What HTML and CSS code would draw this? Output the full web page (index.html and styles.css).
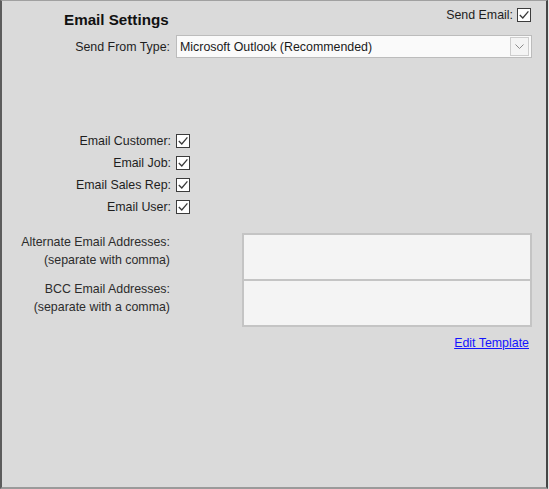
FILE: index.html
```html
<!DOCTYPE html>
<html lang="en">
<head>
  <meta charset="UTF-8" />
  <title>Email Settings</title>
  <link rel="stylesheet" href="styles.css">
</head>
<body>
  <div class="panel">
    <div class="header">
      <h1 class="title">Email Settings</h1>
      <label class="send-email">
        <span>Send Email:</span>
        <span class="check">
          <svg width="14" height="14" viewBox="0 0 14 14"><rect x="0.5" y="0.5" width="13" height="13" fill="#fff" stroke="#3c3c3c"/><path d="M2.8 7l3 3L11.4 3.4" fill="none" stroke="#3a3a3a" stroke-width="1.3"/></svg>
        </span>
      </label>
    </div>

    <div class="row from-row">
      <div class="label">Send From Type:</div>
      <div class="select">
        <span class="select-text">Microsoft Outlook (Recommended)</span>
        <span class="select-btn">
          <svg width="9" height="5" viewBox="0 0 9 5"><path d="M0.5 0.5l4 4 4-4" fill="none" stroke="#8a8a8a"/></svg>
        </span>
      </div>
    </div>

    <div class="checklist" id="checklist"></div>

    <div class="addresses">
      <div class="row addr-row">
        <div class="label addr-label">Alternate Email Addresses:<br>(separate with comma)</div>
        <div class="box"></div>
      </div>
      <div class="row addr-row second">
        <div class="label addr-label">BCC Email Addresses:<br>(separate with a comma)</div>
        <div class="box"></div>
      </div>
    </div>

    <div class="links">
      <a href="#" class="edit-link">Edit Template</a>
    </div>
  </div>

  <script>
    const options = ["Email Customer:", "Email Job:", "Email Sales Rep:", "Email User:"];
    const checklist = document.getElementById('checklist');

    options.forEach(text => {
      const row = document.createElement("div");
      row.className = "row check-row";
      row.innerHTML = `
        <div class="label">${text}</div>
        <span class="check">
          <svg width="14" height="14" viewBox="0 0 14 14"><rect x="0.5" y="0.5" width="13" height="13" fill="#fff" stroke="#3c3c3c"/><path d="M2.8 7l3 3L11.4 3.4" fill="none" stroke="#3a3a3a" stroke-width="1.3"/></svg>
        </span>
      `;
      checklist.appendChild(row);
    });
  </script>
</body>
</html>
```

FILE: styles.css
```css
* {
  box-sizing: border-box;
  margin: 0;
  padding: 0;
}
body {
  font-family: "Liberation Sans", Arial, sans-serif;
  font-size: 12.4px;
  color: #1e1e1e;
  background-color: #e6e6e6;
}
.panel {
  width: 548px;
  height: 489px;
  background-color: #dadada;
  border-top: 1px solid #a0a0a0;
  border-left: 2px solid #5c5c5c;
  border-right: 2px solid #454545;
  border-bottom: 2px solid #9a9a9a;
  padding: 7px 14px 0 0;
}
.header {
  display: flex;
  justify-content: space-between;
  align-items: flex-start;
  padding-left: 62px;
  padding-right: 1px;
}
.title {
  font-size: 15.2px;
  font-weight: bold;
  line-height: 18px;
  margin-top: 3px;
  color: #111;
}
.send-email {
  display: flex;
  align-items: center;
  gap: 4px;
  line-height: 14px;
}
.check {
  display: block;
  width: 14px;
  height: 14px;
}
.check svg {
  display: block;
}
.row {
  display: grid;
  grid-template-columns: 168px 1fr;
  column-gap: 6px;
  align-items: center;
}
.label {
  text-align: right;
  line-height: 14px;
  white-space: nowrap;
}
.from-row {
  margin-top: 6px;
}
.select {
  height: 23px;
  display: flex;
  align-items: center;
  justify-content: space-between;
  background-color: #fafafa;
  border: 1px solid #bcbcbc;
  padding: 0 2px 0 3px;
}
.select-text {
  line-height: 14px;
  color: #1a1a1a;
}
.select-btn {
  width: 19px;
  height: 19px;
  display: flex;
  align-items: center;
  justify-content: center;
  border: 1px solid #cdcdcd;
  background-color: #f4f4f4;
}
.checklist {
  margin-top: 72px;
}
.check-row {
  height: 22px;
  column-gap: 6px;
}
.check-row .label {
  margin-right: -1px;
}
.addresses {
  margin-top: 15px;
}
.addr-row {
  grid-template-columns: 168px 1fr;
  column-gap: 72px;
  align-items: start;
}
.addr-row.second {
  margin-top: -2px;
}
.addr-row.second .addr-label {
  padding-top: 1px;
}
.addr-label {
  line-height: 18px;
  color: #2c2c2c;
}
.box {
  height: 48px;
  background-color: #f4f4f4;
  border: 2px solid #c4c4c4;
}
.links {
  display: flex;
  justify-content: flex-end;
  margin-top: 9px;
  padding-right: 3px;
}
.edit-link {
  color: #1414ff;
  line-height: 14px;
}
```
